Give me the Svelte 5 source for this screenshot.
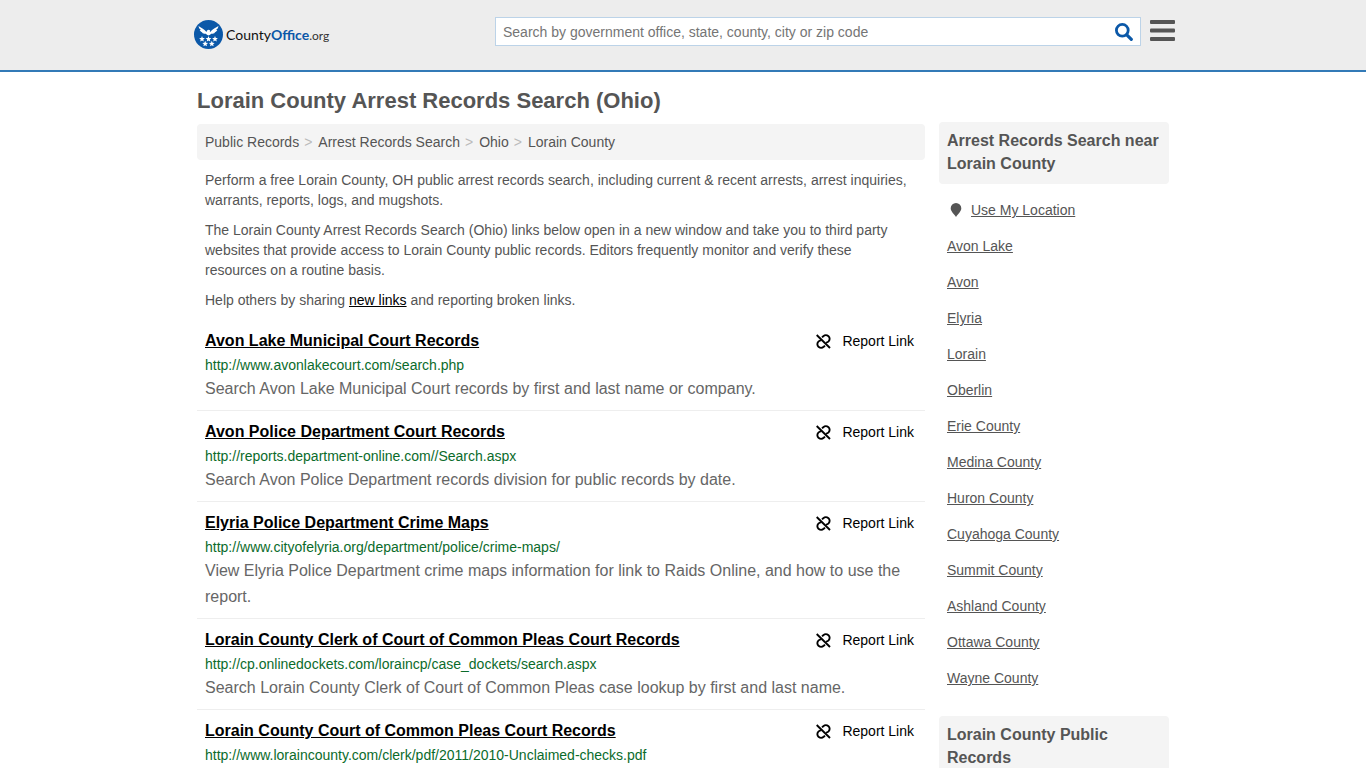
<script lang="ts">
	interface RecordLink {
		title: string;
		url: string;
		description: string;
	}

	let query = $state('');

	const crumbs = ['Public Records', 'Arrest Records Search', 'Ohio', 'Lorain County'];

	const records: RecordLink[] = [
		{
			title: 'Avon Lake Municipal Court Records',
			url: 'http://www.avonlakecourt.com/search.php',
			description: 'Search Avon Lake Municipal Court records by first and last name or company.'
		},
		{
			title: 'Avon Police Department Court Records',
			url: 'http://reports.department-online.com//Search.aspx',
			description: 'Search Avon Police Department records division for public records by date.'
		},
		{
			title: 'Elyria Police Department Crime Maps',
			url: 'http://www.cityofelyria.org/department/police/crime-maps/',
			description: 'View Elyria Police Department crime maps information for link to Raids Online, and how to use the report.'
		},
		{
			title: 'Lorain County Clerk of Court of Common Pleas Court Records',
			url: 'http://cp.onlinedockets.com/loraincp/case_dockets/search.aspx',
			description: 'Search Lorain County Clerk of Court of Common Pleas case lookup by first and last name.'
		},
		{
			title: 'Lorain County Court of Common Pleas Court Records',
			url: 'http://www.loraincounty.com/clerk/pdf/2011/2010-Unclaimed-checks.pdf',
			description: ''
		}
	];

	const nearby = [
		'Avon Lake', 'Avon', 'Elyria', 'Lorain', 'Oberlin', 'Erie County', 'Medina County',
		'Huron County', 'Cuyahoga County', 'Summit County', 'Ashland County', 'Ottawa County', 'Wayne County'
	];

	// Centres of the five stars in the logo
	const stars = [[8, 19], [14.5, 19], [21, 19], [11.2, 23.8], [17.8, 23.8]];
</script>

<header>
	<div class="bar">
		<a class="logo" href="#home" aria-label="CountyOffice.org">
			<svg width="30" height="30" viewBox="0 0 30 30" aria-hidden="true">
				<circle cx="14.500" cy="14.500" r="14.500" fill="#0b58a8" />
				<path
					fill="#fff"
					d="M4.500 6c2.500 1.500 5.500 3 8 6l.5-1.500 1.500-.8 1.800.6-.6.6.5 1.100c2.300-3 5.500-4.500 8.300-6-.3 2-1.200 3.200-2.500 4l1.300-.1c-.8 1.400-1.900 2.100-3.200 2.500l1 .1c-1.300 1.200-2.600 1.400-4 1.300l-1 1-1.600.6-1.600-.6-1-1c-1.400.1-2.700-.1-4-1.300l1-.1C7.600 12 6.500 11.300 5.700 9.900l1.300.1C5.700 9.200 4.800 8 4.500 6z"
				/>
				{#each stars as [x, y]}
					<path
						fill="#fff"
						transform="translate({x} {y})"
						d="M0-3 .8-1 2.900-.9 1.300.5 1.800 2.500 0 1.400-1.800 2.500-1.300.5-2.900-.9-.8-1z"
					/>
				{/each}
			</svg>
			<span class="name">County<b>Office</b><small>.org</small></span>
		</a>
		<form class="search" role="search" onsubmit={(e) => e.preventDefault()}>
			<input
				type="text"
				bind:value={query}
				aria-label="Search"
				placeholder="Search by government office, state, county, city or zip code"
			/>
			<button type="submit" aria-label="Search">
				<svg width="18" height="18" viewBox="0 0 18 18" fill="none" stroke="#0b58a8">
					<circle cx="7.300" cy="7.300" r="5.900" stroke-width="2.800" />
					<path d="M11.800 11.800l4.500 4.500" stroke-width="3.200" stroke-linecap="round" />
				</svg>
			</button>
		</form>
		<button class="menu" aria-label="Menu">
			<svg width="25" height="22" viewBox="0 0 25 22" fill="#555">
				<rect width="25" height="4" rx="1" />
				<rect y="8.500" width="25" height="4" rx="1" />
				<rect y="17" width="25" height="4" rx="1" />
			</svg>
		</button>
	</div>
</header>

<div class="page">
	<main>
		<h1>Lorain County Arrest Records Search (Ohio)</h1>
		<nav class="crumbs" aria-label="Breadcrumb">
			{#each crumbs as crumb, i}
				{#if i > 0}<span>&gt;</span>{/if}
				<a href="#crumb">{crumb}</a>
			{/each}
		</nav>
		<div class="intro">
			<p>
				Perform a free Lorain County, OH public arrest records search, including current &amp; recent arrests,
				arrest inquiries, warrants, reports, logs, and mugshots.
			</p>
			<p>
				The Lorain County Arrest Records Search (Ohio) links below open in a new window and take you to third
				party websites that provide access to Lorain County public records. Editors frequently monitor and
				verify these resources on a routine basis.
			</p>
			<p>Help others by sharing <a href="#new">new links</a> and reporting broken links.</p>
		</div>
		<ul class="records">
			{#each records as record}
				<li>
					<div class="top">
						<h2><a href={record.url}>{record.title}</a></h2>
						<button class="report">
							<svg width="15" height="15" viewBox="0 0 15 15" fill="none" stroke="#000" stroke-width="1.900" aria-hidden="true">
								<path d="M.7 1l13.300 13" />
								<path d="M6 3.400 7.300 2.200C8.800.9 11 1 12.500 2.300s1.500 3.700.1 5.100c-.7.700-1.600 1.100-2.600 1.200" />
								<path d="M9 11.600l-1.300 1.200C6.200 14.100 4 14 2.500 12.700s-1.500-3.700-.1-5.100C3.100 6.900 4 6.500 5 6.400" />
							</svg>
							Report Link
						</button>
					</div>
					<div class="url">{record.url}</div>
					{#if record.description}
						<div class="description">{record.description}</div>
					{/if}
				</li>
			{/each}
		</ul>
	</main>

	<aside>
		<h3>Arrest Records Search near Lorain County</h3>
		<ul>
			<li>
				<svg width="18" height="14" viewBox="0 0 18 14" aria-hidden="true">
					<path fill="#555" d="M9 0a5.300 5.300 0 0 1 5.300 5.300C14.300 8.500 11 11 9 14 7 11 3.700 8.500 3.700 5.300A5.300 5.300 0 0 1 9 0z" />
				</svg>
				<a href="#location">Use My Location</a>
			</li>
			{#each nearby as place}
				<li><a href="#place">{place}</a></li>
			{/each}
		</ul>
		<h3>Lorain County Public Records</h3>
	</aside>
</div>

<style>
	:global(body) {
		margin: 0;
		background: #fff;
		color: #555;
		font: 14px/20px "Liberation Sans", Arial, sans-serif;
	}

	header {
		background: #ededed;
		border-bottom: 2px solid #337ab7;
	}

	.bar {
		display: flex;
		align-items: flex-start;
		box-sizing: border-box;
		max-width: 984px;
		height: 70px;
		margin: 0 auto;
		padding: 17px 0 0 3px;
	}

	.logo {
		display: flex;
		align-items: center;
		gap: 2px;
		flex: 0 0 301px;
		height: 36px;
		color: #111;
		text-decoration: none;
	}

	.name {
		font: 14px/20px Lato, sans-serif;
	}

	.name b {
		color: #0b58a8;
	}

	.name small {
		font-size: 12px;
		color: #333;
	}

	.search {
		display: flex;
		flex: 1;
		box-sizing: border-box;
		height: 29px;
		background: #fff;
		border: 1px solid #bcd3e8;
	}

	.search input {
		flex: 1;
		min-width: 0;
		padding: 0 7px;
		border: 0;
		outline: 0;
		background: none;
		color: #555;
		font: inherit;
	}

	.search input::placeholder {
		color: #757575;
	}

	button {
		display: flex;
		align-items: center;
		padding: 0;
		border: 0;
		background: none;
		font: inherit;
		cursor: pointer;
	}

	.search button {
		padding: 0 7px;
	}

	.menu {
		margin: 3px 0 0 9px;
	}

	.page {
		display: flex;
		align-items: flex-start;
		gap: 14px;
		max-width: 972px;
		margin: 0 auto;
	}

	main {
		flex: 1;
		min-width: 0;
	}

	h1 {
		margin: 15px 0 9px;
		font-size: 22px;
		line-height: 28px;
	}

	.crumbs {
		display: flex;
		gap: 5px;
		padding: 8px;
		border-radius: 4px;
		background: #f4f4f4;
	}

	.crumbs a {
		color: #555;
		text-decoration: none;
	}

	.crumbs span {
		margin-right: 1px;
		color: #bbb;
	}

	.intro {
		padding: 0 8px;
	}

	p {
		margin: 10px 0;
	}

	p a {
		color: #000;
	}

	ul {
		margin: 0;
		padding: 0;
		list-style: none;
	}

	.records li {
		padding: 11px 8px 8px;
		border-bottom: 1px solid #eee;
	}

	.top {
		display: flex;
		justify-content: space-between;
		margin-bottom: 4px;
	}

	h2 {
		margin: 0;
		font-size: 16px;
		line-height: 20px;
	}

	h2 a {
		color: #000;
	}

	.report {
		gap: 11px;
		padding: 0 3px;
		color: #000;
	}

	.url {
		margin-bottom: 1px;
		color: #0b6b2b;
	}

	.description {
		color: #666;
		font-size: 16px;
		line-height: 26px;
	}

	aside {
		flex: 0 0 230px;
		margin-top: 50px;
	}

	h3 {
		margin: 0;
		padding: 7px 8px 9px;
		border-radius: 4px;
		background: #f4f4f4;
		font-size: 16px;
		line-height: 23px;
	}

	aside ul {
		padding: 8px 8px 20px;
	}

	aside li {
		display: flex;
		align-items: center;
		gap: 6px;
		height: 36px;
	}

	aside a {
		color: #555;
	}
</style>
